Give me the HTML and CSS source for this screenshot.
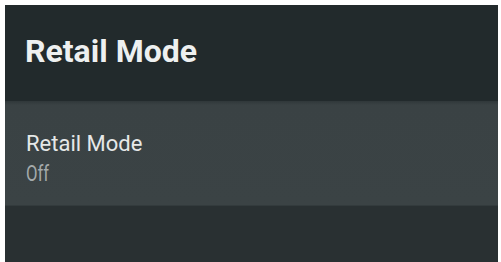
FILE: index.html
```html
<!DOCTYPE html>
<html>
<head>
<meta charset="utf-8">
<link rel="stylesheet" href="styles.css">
</head>
<body>
<div class="screen">
  <header class="header"><h1 class="title">Retail Mode</h1></header>
  <div class="item">
    <div class="item-title">Retail Mode</div>
    <div class="item-value">Off</div>
  </div>
  <div class="rest"></div>
</div>
</body>
</html>
```
FILE: styles.css
```css
html, body { margin: 0; padding: 0; background: #ffffff; }
body { width: 501px; height: 262px; overflow: hidden; }
.screen {
  margin: 5px 3px 0 5px;
  height: 257px;
  display: flex;
  flex-direction: column;
  background: #293032;
  font-family: Roboto, "Liberation Sans", sans-serif;
}
.header {
  height: 96px;
  box-sizing: border-box;
  background: #222a2c;
  padding: 27px 0 0 20px;
}
.title {
  margin: 0;
  font-size: 32px;
  line-height: 38px;
  font-weight: 700;
  color: #eef0f0;
}
.item {
  height: 105px;
  box-sizing: border-box;
  background: linear-gradient(#30383a 0, #3a4244 4px, #3b4345 100%);
  padding: 30px 0 0 21px;
  border-bottom: 1px solid #333b3d;
}
.item-title {
  font-size: 22px;
  line-height: 26px;
  color: #e6e8e8;
}
.item-value {
  margin-top: 4px;
  font-size: 22px;
  line-height: 26px;
  color: #a4aaab;
  transform: scaleX(0.76);
  transform-origin: left center;
}
.rest { flex: 1; background: #293032; }
```
